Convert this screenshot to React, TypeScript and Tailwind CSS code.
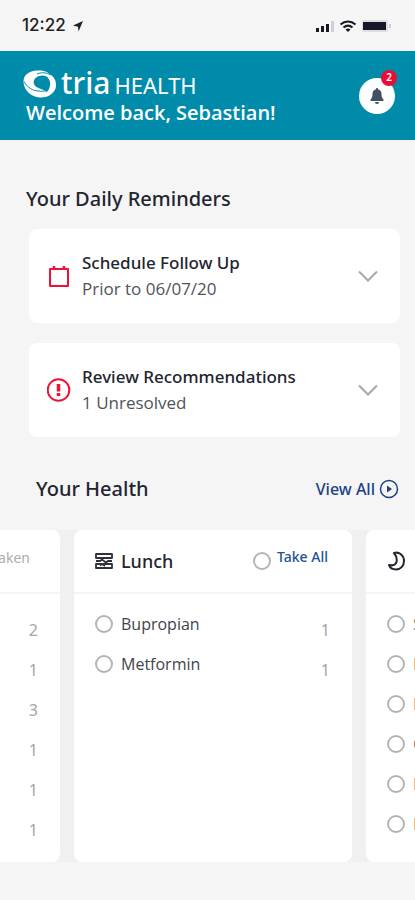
const reminders = [
  { title: 'Schedule Follow Up', detail: 'Prior to 06/07/20', icon: CalendarIcon },
  { title: 'Review Recommendations', detail: '1 Unresolved', icon: AlertIcon },
]

const lunch = [
  { name: 'Bupropian', count: 1 },
  { name: 'Metformin', count: 1 },
]

const breakfastCounts = [2, 1, 3, 1, 1, 1]
const bedtime = ['S', 'L', 'L', 'C', 'L', 'L']

function CalendarIcon() {
  return (
    <svg viewBox="0 0 24 24" className="size-6" fill="none" stroke="#ee1238" strokeWidth="2">
      <path d="M3 5h18v17H3z" strokeLinejoin="round" />
      <path d="M7 5V2M17 5V2" strokeWidth="2.500" />
    </svg>
  )
}

function AlertIcon() {
  return (
    <svg viewBox="0 0 24 24" className="size-6" fill="none" stroke="#ee1238" strokeWidth="2">
      <circle cx="11.500" cy="12" r="10.800" />
      <path d="M11.500 6v7.500M11.500 15v3" strokeWidth="3.500" />
    </svg>
  )
}

function ChevronIcon() {
  return (
    <svg viewBox="0 0 20 12" className="h-3 w-5" fill="none" stroke="#a3a8a8" strokeWidth="2">
      <path d="M1 1.500 10 10.500 19 1.500" />
    </svg>
  )
}

function Logo() {
  return (
    <svg viewBox="0 0 34 28" className="h-7 w-[34px]">
      <path d="M14 .5c7-.5 11 1.500 13 4 4 2 6.500 6.500 6 11.500-.5 7-8 12-16 11.500C8 27 .5 20 .5 11.500.5 5 6 1 14 .5z" fill="#fff" />
      <path d="M12 8.500c3-3 8-4 11.500-2 3.500 2.500 4.500 7 3 11-.6 2-1.500 3.500-3 4.500-2.500-2.500-6-3-9-4.500-4-2-5-6-2.500-9z" fill="#008bab" />
      <path d="M1 11.500c4 7 9 9 14 9.500 3 .3 6 .5 8.500-.5M14 4c5-2 10-1.500 13.500 1" fill="none" stroke="#008bab" strokeWidth="1" />
    </svg>
  )
}

function StatusBar() {
  return (
    <div className="flex h-[51px] items-center justify-between pl-[22px] pr-6 text-[#222]">
      <div className="flex items-center gap-1.5 text-[17px] font-medium">
        <span className="font-['Inter',sans-serif]">12:22</span>
        <svg viewBox="0 0 12 12" className="size-3" fill="currentColor">
          <path d="M11 1 6.500 11.500 6 6.800 1 5.500z" />
        </svg>
      </div>
      <div className="flex items-center gap-1">
        <svg viewBox="0 0 19 12" className="h-3 w-[19px]" fill="#181820">
          <rect x="0" y="8" width="3" height="4" />
          <rect x="5" y="6" width="3" height="6" />
          <rect x="10" y="4" width="3" height="8" />
          <rect x="15" y="1" width="3" height="11" fill="#d0d0d2" />
        </svg>
        <svg viewBox="0 0 18 12" className="h-3 w-[18px]" fill="none" stroke="#181820" strokeWidth="2">
          <path d="M1.500 4.500c4.500-4 10.500-4 15 0M4.500 7.500c3-2.500 6-2.500 9 0" />
          <path d="M6.500 9.500c1.500-1.200 3.500-1.200 5 0L9 12z" fill="#181820" stroke="none" />
        </svg>
        <svg viewBox="0 0 30 14" className="h-3.5 w-[30px]">
          <rect x="1" y="1" width="26" height="12" rx="2" fill="#dedee0" />
          <rect x="2" y="3" width="23" height="8" fill="#17172a" />
          <rect x="28" y="5" width="2" height="4" fill="#d0d0d2" />
        </svg>
      </div>
    </div>
  )
}

function Header() {
  return (
    <header className="flex h-[89px] items-center justify-between bg-[#008bab] pl-[23px] pr-5 text-white">
      <div>
        <div className="flex items-center gap-1">
          <Logo />
          <div className="flex items-baseline gap-1 font-['Noto_Sans',sans-serif] leading-8">
            <span className="text-[30px] font-medium">tria</span>
            <span className="text-[22px]">HEALTH</span>
          </div>
        </div>
        <p className="pl-[3px] font-['Open_Sans',sans-serif] text-xl leading-6 font-semibold">Welcome back, Sebastian!</p>
      </div>
      <button aria-label="Notifications" className="relative flex size-9 items-center justify-center rounded-full bg-white">
        <svg viewBox="0 0 14 16" className="h-4 w-3.5" fill="#425064">
          <path d="M7 0c.8 0 1 .6 1 1.200 2.500.6 3.500 2.300 3.500 4.800 0 3 .8 4.200 2 5.500V13H.5v-1.500C1.700 10.200 2.500 9 2.500 6c0-2.500 1-4.200 3.500-4.800C6 .6 6.200 0 7 0zM5 14h4c0 1.200-.8 2-2 2s-2-.8-2-2z" />
        </svg>
        <span className="absolute -right-0.5 -top-2 flex size-4 items-center justify-center rounded-full bg-[#e90d35] text-[10px] font-semibold text-white">2</span>
      </button>
    </header>
  )
}

function Tick({ id }: { id: string }) {
  return (
    <input
      id={id}
      type="checkbox"
      className="size-[18px] shrink-0 appearance-none rounded-full border-2 border-[#b2b5b5] checked:bg-[#00437f]"
    />
  )
}

export default function App() {
  return (
    <div className="min-h-screen overflow-hidden bg-[#f5f5f5] font-['Noto_Sans',sans-serif] text-[#22252f]">
      <StatusBar />
      <Header />
      <main>
        <section className="pt-[45px] pl-[29px] pr-[15px]">
          <h2 className="-ml-[3px] text-xl leading-7 font-medium">Your Daily Reminders</h2>
          <div className="mt-4 flex flex-col gap-5">
            {reminders.map((item) => (
              <button key={item.title} className="flex h-[94px] w-full items-center rounded-lg bg-white pl-[18px] pr-[22px] text-left">
                <item.icon />
                <span className="ml-[11px] flex-1">
                  <span className="block text-[17px] leading-[26px] font-medium">{item.title}</span>
                  <span className="block font-['Open_Sans',sans-serif] text-[17px] leading-[26px] text-[#50535b]">{item.detail}</span>
                </span>
                <ChevronIcon />
              </button>
            ))}
          </div>
        </section>

        <section>
          <div className="mt-[38px] flex h-7 items-center justify-between pl-9 pr-4">
            <h2 className="text-xl font-medium">Your Health</h2>
            <a href="#health" className="flex items-center gap-1 text-base font-medium text-[#1c4183]">
              View All
              <svg viewBox="0 0 20 20" className="size-5" fill="none" stroke="currentColor" strokeWidth="1.500">
                <circle cx="10" cy="10" r="8.500" />
                <path d="M8 6.500 13 10l-5 3.500z" fill="currentColor" stroke="none" />
              </svg>
            </a>
          </div>

          <div id="health" className="mt-[27px] flex h-[332px] gap-3.5 bg-[#f0f0f0]">
            <article className="w-[60px] shrink-0 rounded-r-lg bg-white">
              <div className="flex h-16 justify-end overflow-hidden border-b-2 border-[#f5f5f5] pr-[30px] pt-[18px]">
                <span className="text-sm leading-5 text-[#abaeae]">Taken</span>
              </div>
              <ul className="pt-4 pr-[22px] text-right text-base leading-10 text-[#a2a6a6]">
                {breakfastCounts.map((count, index) => (
                  <li key={index}>{count}</li>
                ))}
              </ul>
            </article>

            <article className="min-w-0 flex-1 rounded-lg bg-white">
              <div className="flex h-16 items-center border-b-2 border-[#f5f5f5] pl-[21px] pr-6">
                <svg viewBox="0 0 18 16" className="h-4 w-[18px]" fill="none" stroke="#30323a" strokeWidth="1.800">
                  <path d="M1 1h16v4H1zM1 11h16v4H1z" strokeLinejoin="round" />
                  <path d="M1 8h4l2-1.500L11 9.500l2-1.500h4M5 12.500l2-1.500 3 2" />
                </svg>
                <h3 className="ml-2 flex-1 text-lg font-medium">Lunch</h3>
                <Tick id="take-all" />
                <label htmlFor="take-all" className="ml-1.5 pb-2 text-sm font-medium text-[#1d5293]">Take All</label>
              </div>
              <ul className="pt-2.5 pl-[21px] pr-[22px]">
                {lunch.map((item) => (
                  <li key={item.name} className="flex h-10 items-center text-base">
                    <Tick id={item.name} />
                    <label htmlFor={item.name} className="ml-2 flex-1 font-['Open_Sans',sans-serif] text-[#41444c]">{item.name}</label>
                    <span className="pt-3 text-[#a2a6a6]">{item.count}</span>
                  </li>
                ))}
              </ul>
            </article>

            <article className="w-[49px] shrink-0 overflow-hidden rounded-l-lg bg-white">
              <div className="flex h-16 items-center border-b-2 border-[#f5f5f5] pl-[21px]">
                <svg viewBox="0 0 20 20" className="size-5 shrink-0" fill="none" stroke="#22252f" strokeWidth="2" strokeLinejoin="round">
                  <path d="M7 2c5-1.500 10 2 10 8 0 5-3.500 8.500-8 8.500-3 0-6-1.500-7-4.500 4 1 6.500 0 7.500-3 .8-3.200 0-6-2.500-9z" />
                </svg>
              </div>
              <ul className="pt-2.5 pl-[21px]">
                {bedtime.map((name, index) => (
                  <li key={index} className="flex h-10 items-center text-base text-[#7d8086]">
                    <Tick id={`bedtime-${index}`} />
                    <label htmlFor={`bedtime-${index}`} className="ml-2">{name}</label>
                  </li>
                ))}
              </ul>
            </article>
          </div>
        </section>
      </main>
    </div>
  )
}
